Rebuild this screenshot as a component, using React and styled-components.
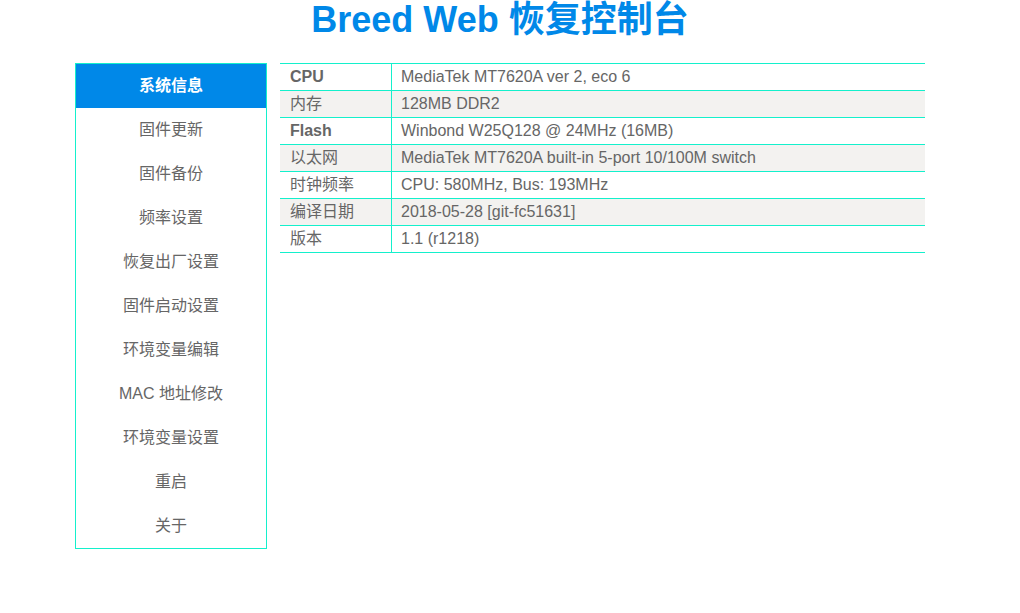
import React from 'react'
import styled, { createGlobalStyle } from 'styled-components'

const GlobalStyle = createGlobalStyle`
  html, body {
    margin: 0;
    padding: 0;
    background: #fff;
    font-family: "Liberation Sans", "Noto Sans CJK SC", sans-serif;
  }
`

const Page = styled.div`
  width: 850px;
  margin-left: 75px;
`

const Title = styled.h1`
  margin: 0;
  height: 63px;
  line-height: 40px;
  text-align: center;
  font-size: 36px;
  font-weight: bold;
  color: #0088e8;
`

const Main = styled.div`
  display: flex;
  align-items: flex-start;
  gap: 13px;
`

const Sidebar = styled.ul`
  list-style: none;
  margin: 0;
  padding: 0;
  width: 190px;
  border: 1px solid #14f0cc;
`

const NavItem = styled.li`
  height: 44px;
  line-height: 44px;
  text-align: center;
  font-size: 16px;
  color: ${p => (p.active ? '#fff' : '#666')};
  background: ${p => (p.active ? '#0088e8' : 'transparent')};
  font-weight: ${p => (p.active ? 'bold' : 'normal')};
  cursor: pointer;
`

const InfoTable = styled.table`
  width: 645px;
  border-collapse: collapse;
  border-top: 1px solid #14f0cc;
  font-size: 16px;
  color: #666;
`

const Row = styled.tr`
  height: 26px;
  background: ${p => (p.shaded ? '#f3f2f0' : '#fff')};
  border-bottom: 1px solid #14f0cc;
`

const Label = styled.td`
  width: 91px;
  padding: 0 10px;
  font-weight: ${p => (p.bold ? 'bold' : 'normal')};
  border-right: 1px solid #14f0cc;
  line-height: 26px;
`

const Value = styled.td`
  padding: 0 10px 0 9px;
  line-height: 26px;
`

const menu = [
  '系统信息',
  '固件更新',
  '固件备份',
  '频率设置',
  '恢复出厂设置',
  '固件启动设置',
  '环境变量编辑',
  'MAC 地址修改',
  '环境变量设置',
  '重启',
  '关于',
]

const info = [
  ['CPU', 'MediaTek MT7620A ver 2, eco 6', true],
  ['内存', '128MB DDR2'],
  ['Flash', 'Winbond W25Q128 @ 24MHz (16MB)', true],
  ['以太网', 'MediaTek MT7620A built-in 5-port 10/100M switch'],
  ['时钟频率', 'CPU: 580MHz, Bus: 193MHz'],
  ['编译日期', '2018-05-28 [git-fc51631]'],
  ['版本', '1.1 (r1218)'],
]

const App = () => (
  <Page>
    <GlobalStyle />
    <Title>Breed Web 恢复控制台</Title>
    <Main>
      <Sidebar>
        { menu.map((item, i) => (
          <NavItem key={ item } active={ i === 0 }>{ item }</NavItem>
        )) }
      </Sidebar>
      <InfoTable>
        <tbody>
          { info.map(([label, value, bold], i) => (
            <Row key={ label } shaded={ i % 2 === 1 }>
              <Label bold={ bold }>{ label }</Label>
              <Value>{ value }</Value>
            </Row>
          )) }
        </tbody>
      </InfoTable>
    </Main>
  </Page>
)

export default App
